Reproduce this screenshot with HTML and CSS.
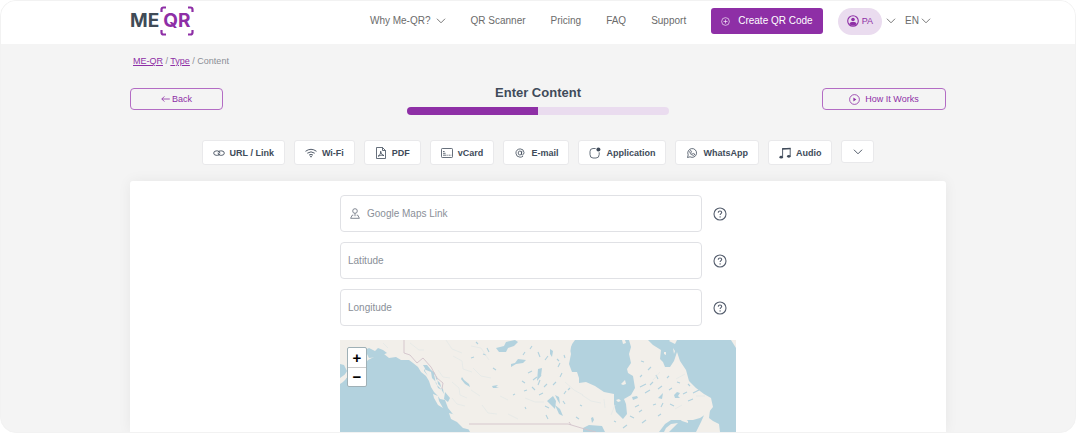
FILE: index.html
```html
<!DOCTYPE html>
<html lang="en">
<head>
<meta charset="utf-8">
<meta name="viewport" content="width=device-width, initial-scale=1">
<title>ME-QR – Enter Content</title>
<link rel="stylesheet" href="styles.css">
</head>
<body>
<svg class="defs" aria-hidden="true">
  <symbol id="chevron" viewBox="0 0 10 6"><path d="M1.200 1L5 4.800 8.800 1" fill="none" stroke="currentColor" stroke-width=".9" stroke-linecap="round" stroke-linejoin="round"/></symbol>
  <symbol id="help" viewBox="0 0 14 14"><circle cx="7" cy="7" r="6" fill="none" stroke="currentColor" stroke-width="1.1"/><path d="M5.300 5.700c0-1.100.7-1.700 1.700-1.700s1.700.6 1.700 1.500c0 1.200-1.600 1.200-1.600 2.600" fill="none" stroke="currentColor" stroke-width="1.1"/><circle cx="7.1" cy="9.900" r=".7" fill="currentColor"/></symbol>
</svg>
<div class="frame">
  <header class="header">
    <div class="container header-row">
      <a class="logo" href="#"><span>ME</span><span class="logo-qr">QR<svg class="logo-brackets" viewBox="0 0 34 30" aria-hidden="true"><path d="M1.500 6V3.500q0-2 2-2H6M28 1.500h2.500q2 0 2 2V6M32.500 24v2.500q0 2-2 2H28M6 28.500H3.500q-2 0-2-2V24" fill="none" stroke="currentColor" stroke-width="2.200"/></svg></span></a>
      <nav class="nav">
        <a href="#">Why Me-QR?<svg class="chevron"><use href="#chevron"/></svg></a>
        <a href="#">QR Scanner</a>
        <a href="#">Pricing</a>
        <a href="#">FAQ</a>
        <a href="#">Support</a>
        <button class="create" type="button"><svg viewBox="0 0 10 10" aria-hidden="true"><g fill="none" stroke="currentColor" stroke-width=".7"><circle cx="5" cy="5" r="4.300"/><path d="M5 2.800v4.400M2.800 5h4.400"/></g></svg>Create QR Code</button>
      </nav>
      <button class="account" type="button"><span class="pill"><svg viewBox="0 0 12 12" aria-hidden="true"><circle cx="6" cy="6" r="5.300" fill="none" stroke="currentColor" stroke-width="1.100"/><circle cx="6" cy="4.500" r="1.800" fill="currentColor"/><path d="M2.400 9q.5-2 2.300-2h2.600q1.800 0 2.300 2Q8.200 10.700 6 10.700T2.400 9z" fill="currentColor"/></svg>PA</span><svg class="chevron"><use href="#chevron"/></svg></button>
      <label class="language"><select aria-label="Language"><option>EN</option></select><svg class="chevron"><use href="#chevron"/></svg></label>
    </div>
  </header>

  <main class="container main">
    <nav class="breadcrumb" aria-label="Breadcrumb"><a href="#">ME-QR</a> / <a href="#">Type</a> / Content</nav>

    <div class="step-row">
      <div class="side"><button class="outline back" type="button"><svg viewBox="0 0 9 8" aria-hidden="true"><path d="M8.800 4H.8M3.400 1.400L.8 4l2.600 2.600" fill="none" stroke="currentColor" stroke-width=".8"/></svg>Back</button></div>
      <div class="step">
        <h1 id="step-title">Enter Content</h1>
        <div class="progress" role="progressbar" aria-labelledby="step-title" aria-valuenow="50" aria-valuemin="0" aria-valuemax="100"><div class="progress-fill" style="width:50%"></div></div>
      </div>
      <div class="side side-end"><button class="outline how" type="button"><svg viewBox="0 0 11 11" aria-hidden="true"><circle cx="5.500" cy="5.500" r="4.900" fill="none" stroke="currentColor" stroke-width=".8"/><path d="M4.400 3.600v3.800l2.900-1.900z" fill="currentColor"/></svg>How It Works</button></div>
    </div>

    <div class="types">
      <button type="button"><svg viewBox="0 0 12 12" aria-hidden="true"><g fill="none" stroke="currentColor" stroke-width=".9"><path d="M6.800 7.300Q6 8.300 4.300 8.300H3.200Q.8 8.200.7 6.100.8 4 3.200 3.900h1.500q2.300.2 2.200 2.600"/><path d="M5.200 4.900Q6 3.900 7.700 3.900h1.100q2.400.1 2.500 2.200-.1 2.100-2.500 2.200H7.300Q5 8.100 5.100 5.700"/></g></svg>URL / Link</button>
      <button type="button"><svg viewBox="0 0 12 12" aria-hidden="true"><g fill="none" stroke="currentColor" stroke-width=".9"><path d="M.5 4.300q5.500-4 11 0M2.300 6.200q3.700-2.700 7.400 0M4 8.100q2-1.400 4 0"/></g><circle cx="6" cy="9.600" r=".8" fill="currentColor"/></svg>Wi-Fi</button>
      <button type="button"><svg viewBox="0 0 12 12" aria-hidden="true"><g fill="none" stroke="currentColor" stroke-width=".8"><path d="M1.500.5h6l3 3v8h-9zM7.500.5v3h3"/><path d="M3 9.300Q6.200 7.500 5.700 4.200 5.600 7.500 9 8.600 6 7.200 3 9.300z"/></g></svg>PDF</button>
      <button type="button"><svg viewBox="0 0 12 12" aria-hidden="true"><g fill="none" stroke="currentColor" stroke-width=".8"><rect x=".5" y="1.500" width="11" height="9" rx=".8"/><path d="M2 4.500h1.600M2 6.300h2.600M2 8.200h3.500"/><path d="M6.300 8.200h4" stroke-dasharray="1 .6"/></g></svg>vCard</button>
      <button type="button"><svg viewBox="0 0 12 12" aria-hidden="true"><g fill="none" stroke="currentColor" stroke-width=".8"><ellipse cx="5.900" cy="6" rx="1.700" ry="2"/><path d="M7.800 3.900L7.500 7q0 1 .9 1 1.600-.4 1.600-2.600Q9.700 2 6.200 1.900 2 2.200 1.900 6.200 2.200 10 6 10.200q1.900 0 3.100-1"/></g></svg>E-mail</button>
      <button type="button"><svg viewBox="0 0 12 12" aria-hidden="true"><path d="M6.600 1.500H4Q1 1.500 1 4.500v3q0 3.500 3 3.500h3q3.200 0 3.200-3.500V5.300" fill="none" stroke="currentColor" stroke-width=".8"/><circle cx="9.400" cy="2.400" r="2" fill="currentColor"/></svg>Application</button>
      <button type="button"><svg viewBox="0 0 12 12" aria-hidden="true"><path d="M1.500 10.500l.7-2.600A4.400 4.400 0 1 1 4 9.800z" fill="none" stroke="currentColor" stroke-width=".8"/><path d="M4 3.700q.8-.7 1.200.1l.3.9-.5.7q.6 1.200 1.700 1.600l.7-.7 1.300.7q0 1.400-1.400 1.400Q4 7.900 3.700 5q0-.7.3-1.300z" fill="none" stroke="currentColor" stroke-width=".7"/></svg>WhatsApp</button>
      <button type="button"><svg viewBox="0 0 12 12" aria-hidden="true"><path d="M3.600 9.800V1.500h7.600v7.700" fill="none" stroke="currentColor" stroke-width=".9"/><path d="M3.200 1.200l8.400-.5v1.600l-8.400.5z" fill="currentColor"/><ellipse cx="2.200" cy="10.200" rx="1.800" ry="1.400" fill="currentColor"/><ellipse cx="9.800" cy="9.300" rx="1.800" ry="1.400" fill="currentColor"/></svg>Audio</button>
      <button class="more" type="button" aria-label="More types"><svg class="chevron"><use href="#chevron"/></svg></button>
    </div>

    <section class="card">
      <form class="form">
        <div class="row">
          <label class="field"><svg class="pin" viewBox="0 0 10 11" aria-hidden="true"><g fill="none" stroke="currentColor" stroke-width=".9"><circle cx="5" cy="3" r="2.300"/><path d="M5 5.300v2.900M3.300 7.200H2.200L.6 10.300h8.800L7.800 7.200H6.700"/></g></svg><input type="text" placeholder="Google Maps Link" aria-label="Google Maps Link"></label>
          <button class="help" type="button" aria-label="About Google Maps link"><svg><use href="#help"/></svg></button>
        </div>
        <div class="row">
          <label class="field"><input type="text" placeholder="Latitude" aria-label="Latitude"></label>
          <button class="help" type="button" aria-label="About latitude"><svg><use href="#help"/></svg></button>
        </div>
        <div class="row">
          <label class="field"><input type="text" placeholder="Longitude" aria-label="Longitude"></label>
          <button class="help" type="button" aria-label="About longitude"><svg><use href="#help"/></svg></button>
        </div>
      </form>
      <div class="map">
        <svg class="map-art" viewBox="0 0 396 92" preserveAspectRatio="xMidYMin slice" role="img" aria-label="Map of Canada">
          <g class="water">
            <path d="M0 43l5-3 3-5 6-2 4-5 6-3 4-5 6-3 4-3 6 0 5 4 7-1 5 3 8 0 4 3 5 4 3 5 5 4 3 5 2 6 3 5 3 3 3 4 5 1 3 8 4 5 4 5 6 4 5 4 3 6v8H0z"/>
            <path d="M0 24l4 1 3 6-3 5-4 5zM25 10l4-2 6 3 3-3 5 2 4 3-9 4-9 1z"/>
            <path d="M83 25l3 5 5 2 1 6 4 4 2 6 4 2-2-7-4-4-1-6-4-3-4-5zM94 34l3 3 1 7 5 5 1 5-3-5-5-5zM105 52l5 6-2 4-4-3zM88 36l-3-5 1-5-2 5z"/>
            <path d="M235 0q-6 7-4 14l-2 10 3 8 5 0 2 6v5l7-1 9 4 9 6 10 2v10l2 8 7 7 4-5-1-10-2-5 7-4 4-7-2-12-5-3-1-4 4-6-2-9 2-7-2-7z"/>
            <path d="M308 0l5 5 8 5-1 9 3 3 2 5 5 0 4-6 3-9 3 9 6 9 3 11 7 7 8 6 7 4 2 9-4 5-9 6-7 2h-22l-6 4-6 8h92V0z"/>
            <path d="M156 8l8-2 2-4 9-2 3 2-4 4-6 2-2 4-7 0zM171 24l4-1 3-4 8 1-3 3-7 1-5 3zM122 37l2 3 5 4 1 3-5-3-4-5zM152 46l6-1-2 2 3 1-6 0zM207 61l6-5 3 5-1 8-4-4zM215 65l5 4 3 7-4-2zM215 55l4 2 1 7-2-3zM251 78l2-1 1 3-2 3zM243 88l6-3 13 1 3 6h-22zM198 29l4-1-1 8-4 5zM210 9l3 2-1 6-2-3zM292 57l5-1 1 2-5 2zM334 55l3-3 3 1-2 3 2 2-5 0zM318 58l5-5-1 6z"/>
            <path class="streams" d="M136 2l2 2M143 14l3 1M147 8l2 4M131 18l3-1M153 28l3 2M182 41l3 2M188 33l4-2M192 47l3 3M198 45l2-5M199 55l4-2M183 15l2-3M184 51l3-1M193 40l4-3M199 37l2-2M204 47l3-3M213 45l3-3M218 27l2-4M224 54l2-3M220 37l2-4M206 75l2 4M205 66l4 2M223 61l2 3M228 50l2-2M198 12l2 5M190 9l2-3M205 20l3-4M217 19l2 2M224 15l1 3M301 21l3 1M308 30l3-3M316 35l2 4M322 46l-4 3M300 47l6-3M305 53l5-3M310 45l3-3M313 65l3-1M323 63l-2 4M343 54l4-2M348 61l5-2M353 53l6-3M329 50l3-2M295 67l4-2M299 72l3-2M283 88l4-3M302 83l4-3M318 76l3-2M300 37l2-2M327 38l2-2M337 42l3 1M330 64l4 2M348 44l2 2M185 67l1 2M173 55l2-1M240 65l2 1M236 77l3 2M274 81l2 1M290 76l4 2"/>
            <path class="rivers" d="M98 30l5 7 7 1M113 16l9 5 1 8 9 3M133 28l8 8 10 2M112 42l7 6 1 7 7 3M131 50l9 6M142 65l6 8 9 1M106 0l6 9 10 4M131 6l10 2 8 12M112 58l5 6 8 2M160 56l8 4M43 3l5 5M70 3l9 7 5 0M185 58l10 4 9 0M225 42l9 8 9 5M242 55l9 6 10 2M264 59l1 9M168 74l10 5M320 32l-7 8M345 34l-9 5M335 69l7-4M356 56l9 0M275 65l-4 10"/>
          </g>
          <g class="land">
            <path d="M0 38l7-5 2 2-6 7-3 2zM93 54l5 2 1 5 4 7-5-3-4-7zM109 73l7 2 6 5 7 4 2 6-8-2-6-6-6-3zM282 0l3 0 1 3-3 1zM281 44l4-4 1 4-3 1zM276 60l3-1 2 2-3 1zM330 0h7l-2 4-6-3zM391 0h5v8zM338 78l6 0 4 3 0 2-6-2zM326 88l5-4 7-1-5 5-4 4h-5zM356 92l5-10 4-9 5-3-1 8 4 3 6 3 1 8z"/>
            <path d="M324 12l2 0 0 3-2-1zM333 8l2 3-1 3z"/>
          </g>
          <g class="borders"><path d="M64 0v13l6 2 7 8 6-5 8 9 6 11 6 5-1 6M129 84h99l10 3 10 3 8 2"/><path d="M229 82l2 3"/></g>
        </svg>
        <div class="zoom"><button type="button" aria-label="Zoom in">+</button><button type="button" aria-label="Zoom out">−</button></div>
      </div>
    </section>
  </main>
</div>
</body>
</html>
```
FILE: styles.css
```css
:root {
  --purple: #8e2fa6;
  --lilac: #eadcef;
  --ink: #404b5a;
  --page: #f4f4f4;
  --line: #e0e1e5;
}

* { box-sizing: border-box; }

body {
  margin: 0;
  background: #fff;
  color: var(--ink);
  font: 10px/12px "Liberation Sans", Arial, sans-serif;
}

button, input, select {
  margin: 0;
  padding: 0;
  border: 0;
  background: none;
  color: inherit;
  font: inherit;
}

button { cursor: pointer; }
a { color: inherit; }
svg { display: block; flex: none; }
.defs { position: absolute; width: 0; height: 0; }

.frame {
  display: flex;
  flex-direction: column;
  height: 100vh;
  overflow: hidden;
  border: 1px solid #f2f2f2;
  border-radius: 16px;
  background: var(--page);
}

.container {
  width: 100%;
  max-width: 816px;
  margin: 0 auto;
}

.chevron { width: 10px; height: 6px; }

/* Header */
.header { background: #fff; color: #6b6b6b; }

.header-row {
  display: flex;
  align-items: center;
  height: 43px;
  padding: 0 15px 3px 0;
}

.logo {
  display: flex;
  gap: 4px;
  color: #404b57;
  font: 700 19px/20px Inter, sans-serif;
  text-decoration: none;
}

.logo-qr { position: relative; color: var(--purple); }

.logo-brackets {
  position: absolute;
  top: -5px;
  left: -3px;
  width: 34px;
  height: 30px;
}

.nav {
  display: flex;
  align-items: center;
  gap: 25px;
  margin-left: auto;
}

.nav a {
  display: flex;
  align-items: center;
  gap: 5px;
  text-decoration: none;
}

.create {
  display: flex;
  align-items: center;
  gap: 8px;
  height: 26px;
  padding: 0 10px;
  border-radius: 3px;
  background: var(--purple);
  color: #fff;
}

.create svg { width: 9px; height: 9px; }

.account {
  display: flex;
  align-items: center;
  gap: 4px;
  margin-left: 15px;
}

.pill {
  display: flex;
  align-items: center;
  gap: 3px;
  height: 27px;
  padding: 0 9px;
  border-radius: 14px;
  background: var(--lilac);
  color: var(--purple);
  font-size: 9px;
}

.pill svg { width: 12px; height: 12px; }

.language {
  display: flex;
  align-items: center;
  gap: 2px;
  margin-left: 9px;
}

.language select { appearance: none; }

/* Step heading */
.main {
  display: flex;
  flex: 1;
  flex-direction: column;
  min-height: 0;
}

.breadcrumb {
  padding: 11px 3px 0;
  color: #8b8e94;
  font-size: 9px;
}

.breadcrumb a { color: var(--purple); }

.step-row {
  display: flex;
  align-items: flex-start;
  padding-top: 18px;
}

.side { display: flex; flex: 1; padding-top: 3px; }
.side-end { justify-content: flex-end; }
.step { flex: 0 1 262px; }

.step h1 {
  margin: 0;
  font-size: 13px;
  line-height: 16px;
  text-align: center;
}

.progress {
  height: 8px;
  margin-top: 6px;
  overflow: hidden;
  border-radius: 4px;
  background: var(--lilac);
}

.progress-fill { height: 100%; background: var(--purple); }

.outline {
  display: flex;
  align-items: center;
  justify-content: center;
  height: 22px;
  border: 1px solid #b36cc4;
  border-radius: 4px;
  color: var(--purple);
  font-size: 9px;
}

.back { gap: 2px; width: 93px; }
.back svg { width: 9px; height: 8px; }
.how { gap: 5px; width: 124px; }
.how svg { width: 11px; height: 11px; }

/* Content type buttons */
.types {
  display: flex;
  align-items: flex-start;
  justify-content: center;
  gap: 9px;
  padding: 25px 0 16px;
}

.types button {
  display: flex;
  align-items: center;
  justify-content: center;
  gap: 5px;
  height: 25px;
  padding: 0 10px;
  border: 1px solid #e9e9eb;
  border-radius: 3px;
  background: #fff;
  font-size: 9px;
  font-weight: 700;
  white-space: nowrap;
}

.types button svg:not(.chevron) { width: 12px; height: 12px; }
.types .more { width: 33px; height: 23px; }

/* Form card */
.card {
  display: flex;
  flex: 1;
  flex-direction: column;
  align-items: center;
  gap: 14px;
  min-height: 0;
  padding-top: 14px;
  border-radius: 3px 3px 0 0;
  background: #fff;
  box-shadow: 0 0 14px rgba(0, 0, 0, 0.06);
}

.form {
  display: flex;
  flex-direction: column;
  gap: 10px;
  width: 100%;
  max-width: 396px;
}

.row {
  display: flex;
  align-items: center;
  gap: 11px;
  padding-right: 9px;
}

.field {
  display: flex;
  flex: 1;
  align-items: center;
  gap: 7px;
  height: 37px;
  padding: 0 7px;
  border: 1px solid var(--line);
  border-radius: 4px;
}

.field input { flex: 1; min-width: 0; outline: 0; }
.field input::placeholder { color: #8a8f98; opacity: 1; }
.pin { width: 10px; height: 11px; margin-left: 2px; color: #747b87; }
.help { color: #555e6e; }
.help svg { width: 14px; height: 14px; }

/* Map */
.map {
  position: relative;
  flex: 1;
  width: 100%;
  max-width: 396px;
  min-height: 0;
  background: #f2efea;
}

.map-art { width: 100%; height: 100%; }
.water { fill: #b3d2de; stroke: none; }
.streams { fill: none; stroke: #b3d2de; stroke-width: 1.1; }
.rivers { fill: none; stroke: #e2e8e6; stroke-width: 0.7; }
.land { fill: #f2efea; }
.borders { fill: none; stroke: #d3c3cb; stroke-width: 0.9; }

.zoom {
  position: absolute;
  top: 7px;
  left: 7px;
  display: flex;
  flex-direction: column;
  width: 20px;
  border: 1px solid #9fb0b6;
  border-radius: 2px;
  background: #fff;
}

.zoom button {
  height: 19px;
  color: #000;
  font-size: 15px;
  font-weight: 700;
}

.zoom button + button { border-top: 1px solid #ccc; }
```
